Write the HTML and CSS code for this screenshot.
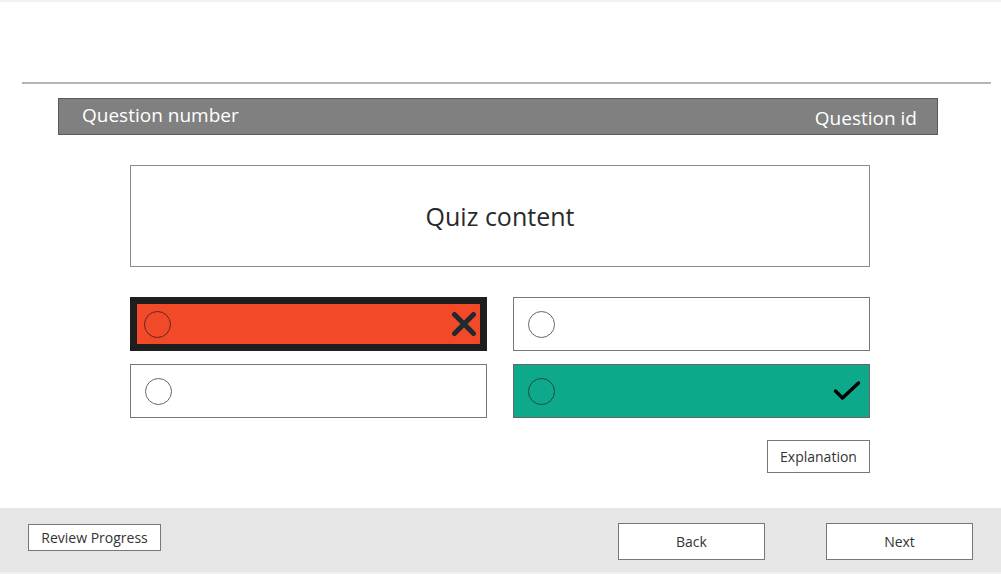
FILE: index.html
```html
<!DOCTYPE html>
<html>
<head>
<meta charset="utf-8">
<link rel="stylesheet" href="styles.css">
</head>
<body>
<div class="page">
  <div class="top"></div>
  <div class="rule"></div>
  <div class="qheader">
    <span>Question number</span>
    <span>Question id</span>
  </div>
  <div class="quiz">Quiz content</div>
  <div class="options">
    <div class="opt wrong">
      <span class="radio"></span>
      <svg class="mark-x" width="26" height="26" viewBox="0 0 26 26"><path d="M3.5 3.5L22.5 22.5M22.5 3.5L3.5 22.5" stroke="#222a30" stroke-width="5" stroke-linecap="round" fill="none"/></svg>
    </div>
    <div class="opt"><span class="radio"></span></div>
    <div class="opt"><span class="radio"></span></div>
    <div class="opt right">
      <span class="radio"></span>
      <svg class="mark-check" width="28" height="22" viewBox="0 0 28 22"><path d="M2.5 11L9.5 18L25.5 3" stroke="#000" stroke-width="3.4" stroke-linecap="round" stroke-linejoin="round" fill="none"/></svg>
    </div>
  </div>
  <div class="explain-row">
    <button class="btn explain">Explanation</button>
  </div>
  <div class="footer">
    <button class="btn review">Review Progress</button>
    <div class="nav">
      <button class="btn navbtn">Back</button>
      <button class="btn navbtn">Next</button>
    </div>
  </div>
</div>
</body>
</html>
```
FILE: styles.css
```css
* { box-sizing: border-box; }
html, body { margin: 0; padding: 0; background: #fff; }
body { font-family: "Open Sans", "Liberation Sans", sans-serif; color: #333; }
.page { width: 1001px; height: 574px; display: flex; flex-direction: column; overflow: hidden; }
.top { height: 82px; border-top: 2px solid #f2f2f2; }
.rule { height: 2px; background: #b4b4b4; margin: 0 10px 0 22px; }
.qheader {
  margin: 14px 63px 0 58px; height: 37px;
  background: #808080; border: 1px solid #5a5a5a;
  display: flex; justify-content: space-between; align-items: center;
  padding: 0 20px 0 23px; color: #fff; font-size: 19px;
}
.qheader span { position: relative; top: -2px; }
.qheader span + span { top: 1px; }
.quiz {
  margin: 30px 0 0 130px; width: 740px; height: 102px;
  border: 1px solid #8a8a8a; display: flex; align-items: center; justify-content: center;
  font-size: 25px; color: #2a2a2a;
}
.options {
  margin: 30px 0 0 130px; width: 740px;
  display: grid; grid-template-columns: 357px 357px; column-gap: 26px; row-gap: 13px;
}
.opt {
  height: 54px; border: 1px solid #777; background: #fff;
  display: flex; align-items: center; justify-content: space-between;
  padding: 0 8px 0 14px;
}
.radio { width: 27px; height: 27px; border-radius: 50%; border: 1px solid #666; flex: none; }
.wrong { background: #f24a28; border: 7px solid #1e1e1e; padding: 0 3px 0 7px; }
.wrong .radio { border-color: #5a2a1e; }
.right { background: #0ea88a; border-color: #666; }
.right .radio { border-color: #1f4a40; }
.explain-row { margin: 22px 0 0 767px; }
.btn {
  font-family: "Open Sans", "Liberation Sans", sans-serif; color: #333;
  background: #fff; border: 1px solid #777; font-size: 14px; padding: 0; margin: 0;
}
.explain { width: 103px; height: 33px; }
.footer {
  margin-top: auto; height: 66px; background: #e6e6e6;
  border-bottom: 2px solid #f0f0f0;
  display: flex; justify-content: space-between; align-items: flex-start;
  padding: 16px 28px 0 28px;
}
.review { width: 133px; height: 27px; }
.nav { display: flex; gap: 61px; margin-top: -1px; }
.navbtn { width: 147px; height: 37px; }
```
